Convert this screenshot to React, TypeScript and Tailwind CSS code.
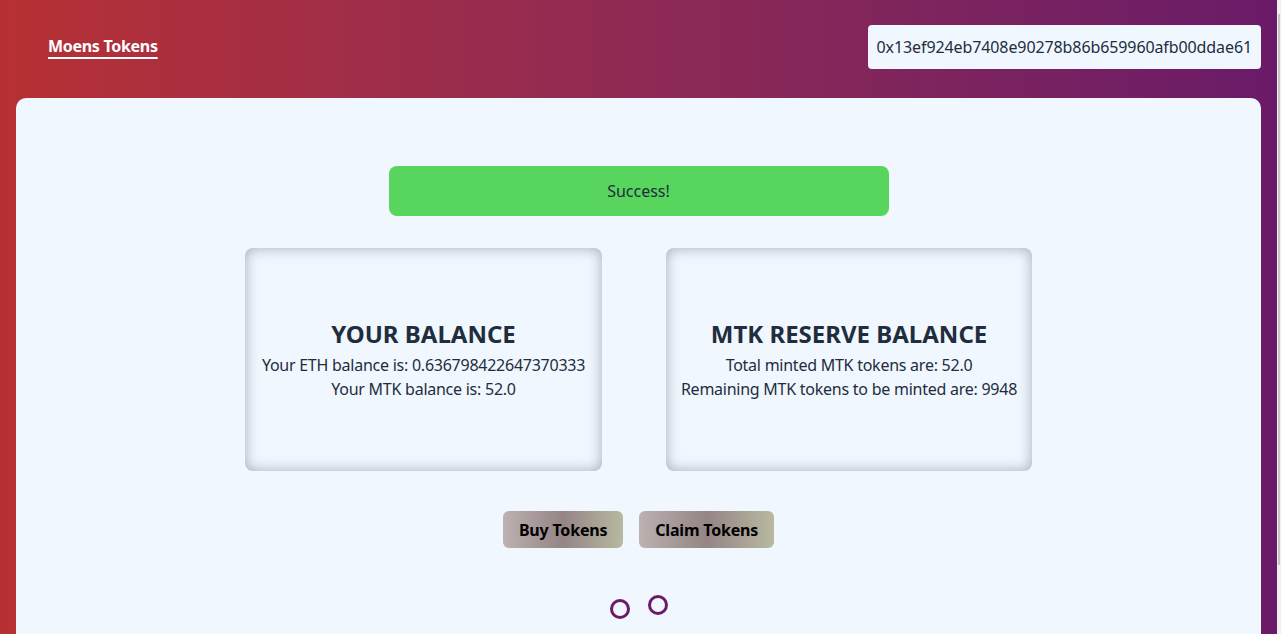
import * as React from "react";

const balances = [
  {
    title: "YOUR BALANCE",
    width: "w-[357px]",
    lines: ["Your ETH balance is: 0.636798422647370333", "Your MTK balance is: 52.0"],
  },
  {
    title: "MTK RESERVE BALANCE",
    width: "w-[366px]",
    lines: ["Total minted MTK tokens are: 52.0", "Remaining MTK tokens to be minted are: 9948"],
  },
];

export default function App() {
  return (
    <div
      className="flex h-[634px] w-full overflow-hidden text-[#1f2d3d]"
      style={{ fontFamily: '"Noto Sans", "Open Sans", sans-serif' }}
    >
      <div className="flex-1 min-w-0 bg-gradient-to-r from-[#b73033] to-[#6a1a68] px-4">
        <header className="flex items-center justify-between h-[98px] pl-8 pb-[4px]">
          <a className="text-white font-bold text-base tracking-[-0.3px] underline underline-offset-[5px] decoration-[1.5px] pb-[2px]">
            Moens Tokens
          </a>
          <div className="bg-[#f0f7ff] rounded-[4px] h-[44px] px-[9px] flex items-center text-base tracking-[-0.1px]">
            0x13ef924eb7408e90278b86b659960afb00ddae61
          </div>
        </header>

        <main className="bg-[#f0f7ff] rounded-t-[10px] h-[600px] flex flex-col items-center pt-[68px]">
          <div className="w-[500px] h-[50px] bg-[#58d55c] rounded-[8px] flex items-center justify-center text-base">
            Success!
          </div>

          <div className="flex gap-16 mt-8">
            {balances.map((b, i) => (
              <div
                key={i}
                className={`${b.width} h-[223px] rounded-[8px] flex flex-col items-center justify-center text-center shadow-[inset_0_0_14px_rgba(110,110,115,0.55)]`}
              >
                <h2 className="text-2xl font-bold mb-[3px]">{b.title}</h2>
                {b.lines.map((l, j) => (
                  <p key={j} className="text-base leading-6 tracking-[-0.25px] whitespace-nowrap">
                    {l}
                  </p>
                ))}
              </div>
            ))}
          </div>

          <div className="flex gap-4 mt-10">
            {["Buy Tokens", "Claim Tokens"].map((t) => (
              <button
                key={t}
                className="h-[37px] px-4 rounded-[6px] font-bold text-base tracking-[-0.2px] text-black bg-gradient-to-r from-[#bdb1b1] via-[#958585] to-[#b8b9a0]"
              >
                {t}
              </button>
            ))}
          </div>

          <div className="flex gap-[18px] mt-[49px]">
            <span className="block w-5 h-5 rounded-full border-[3px] border-[#6b1a6b] mt-[2px]" />
            <span className="block w-5 h-5 rounded-full border-[3px] border-[#6b1a6b] -mt-[2px]" />
          </div>
        </main>
      </div>

      <div className="w-[4px] bg-[#f1f1f1] flex flex-col">
        <div className="h-[14px]" />
        <div className="h-[551px] w-[2px] bg-[#c4c4c4] ml-[1px]" />
      </div>
    </div>
  );
}
